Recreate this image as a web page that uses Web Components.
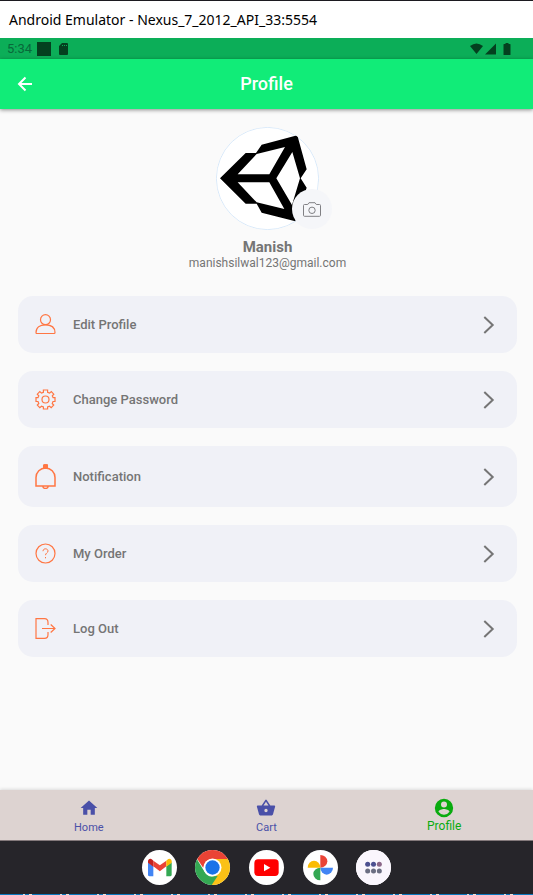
<!DOCTYPE html>
<html lang="en">
<head>
<meta charset="utf-8">
<meta name="viewport" content="width=device-width, initial-scale=1">
<title>Profile</title>
<style>
  html, body { margin: 0; height: 100%; }
  body { font-family: Roboto, "Liberation Sans", sans-serif; color: #757575; background: #fafafa; }
</style>
</head>
<body>
<emulator-window caption="Android Emulator - Nexus_7_2012_API_33:5554">
  <status-bar slot="top" time="5:34"></status-bar>
  <app-bar slot="top">Profile</app-bar>
  <profile-card name="Manish" email="manishsilwal123@gmail.com"></profile-card>
  <menu-list>
    <menu-item icon="user">Edit Profile</menu-item>
    <menu-item icon="gear">Change Password</menu-item>
    <menu-item icon="bell">Notification</menu-item>
    <menu-item icon="help">My Order</menu-item>
    <menu-item icon="logout">Log Out</menu-item>
  </menu-list>
  <tab-bar slot="bottom">
    <tab-link icon="home">Home</tab-link>
    <tab-link icon="cart">Cart</tab-link>
    <tab-link icon="account" active>Profile</tab-link>
  </tab-bar>
  <app-dock slot="bottom"></app-dock>
</emulator-window>

<script>
const define = (name, render) => customElements.define(name, class extends HTMLElement {
  constructor() {
    super();
    const t = document.createElement('template');
    t.innerHTML = render(this);
    this.attachShadow({ mode: 'open' }).appendChild(t.content.cloneNode(true));
  }
});

define('emulator-window', el => `
<style>
  :host { display: flex; flex-direction: column; min-height: 100vh; box-sizing: border-box; }
  .edge { height: 1px; flex: none; background: #1c1a20; }
  .edge.low { background: repeating-linear-gradient(90deg, #0a78bd 0 23px, #cfe0e8 23px 25px, #0a78bd 25px 29px, #e5e3dc 29px 32px, #0a78bd 32px 37px); }
  .title { flex: none; background: #fff; color: #000; font: 14px/20px "Noto Sans", "Open Sans", sans-serif; padding: 9px 9px 8px; }
  main { flex: 1; display: flex; flex-direction: column; padding: 18px 16px 18px 18px; }
</style>
<div class="edge"></div>
<div class="title">${el.getAttribute('caption')}</div>
<slot name="top"></slot>
<main><slot></slot></main>
<slot name="bottom"></slot>
<div class="edge low"></div>`);

define('status-bar', el => `
<style>
  :host { display: flex; align-items: center; height: 21px; background: #0cae58; color: #064a26; font-size: 13px; padding: 0 22px 0 7px; }
  .time { color: #08693a; margin-right: 5px; }
  .sq { width: 14px; height: 14px; background: #04401f; margin-right: 8px; }
  .right { margin-left: auto; display: flex; align-items: center; gap: 2px; }
  svg { display: block; fill: #04401f; }
  .bat { margin-left: 4px; }
</style>
<span class="time">${el.getAttribute('time')}</span>
<span class="sq"></span>
<svg width="9" height="12" viewBox="0 0 9 12"><path fill-rule="evenodd" d="M3 0h5a1 1 0 0 1 1 1v10a1 1 0 0 1-1 1H1a1 1 0 0 1-1-1V3zM3 2v1h1V2zM5 2v1h1V2zM7 2v1h1V2z"/></svg>
<span class="right">
  <svg width="13" height="12" viewBox="0 0 13 12"><path d="M0 3Q6.5-2 13 3L6.5 11z"/></svg>
  <svg width="12" height="12" viewBox="0 0 12 12"><path d="M0 11.500L11 .5v11z"/></svg>
  <svg class="bat" width="8" height="12" viewBox="0 0 8 12"><path d="M2.500 0h3v1H7q.5 0 .5.500v10q0 .5-.5.500H1q-.5 0-.5-.5v-10Q.5 1 1 1h1.500z"/></svg>
</span>`);

define('app-bar', () => `
<style>
  :host { display: grid; grid-template-columns: 1fr auto 1fr; align-items: center; height: 50px; background: #11ec78; color: #fff; box-shadow: 0 1px 4px rgba(0,0,0,.45); position: relative; }
  button { border: 0; background: none; padding: 0 0 0 16px; justify-self: start; color: inherit; }
  svg { display: block; }
  h1 { margin: 0; font-size: 18px; line-height: 24px; font-weight: 500; }
</style>
<button aria-label="Back"><svg width="18" height="18" viewBox="0 0 18 18" fill="none" stroke="#fff" stroke-width="2"><path d="M16 9H3M9.500 2.500L3 9l6.500 6.500"/></svg></button>
<h1><slot></slot></h1>`);

define('profile-card', el => `
<style>
  :host { display: flex; flex-direction: column; align-items: center; color: #757575; }
  .avatar { position: relative; width: 103px; height: 103px; margin-bottom: 8px; }
  .avatar > svg { display: block; width: 100%; height: 100%; border-radius: 50%; }
  button { position: absolute; right: -13px; bottom: 1px; width: 40px; height: 40px; padding: 0; border: 0; border-radius: 50%; background: #f5f6f9; display: grid; place-items: center; }
  h2 { margin: 0; font-size: 15px; line-height: 18px; font-weight: 700; }
  p { margin: 0; font-size: 12px; line-height: 14px; }
</style>
<div class="avatar">
  <svg viewBox="108 36 309 309" role="img" aria-label="Profile picture">
    <circle cx="262.500" cy="190.500" r="153.500" fill="#fff" stroke="#c4def8" stroke-width="2"/>
    <path d="M120 190L197 114H228L245 89L352 61L380 163L362 190L380 218L346 319L245 293L230 266H197Z"/>
    <path fill="#fff" d="M173 178L230 117L315 96L268 178ZM173 202H268L313 282L230 262ZM289 190L337 111L360 190L336 270Z"/>
  </svg>
  <button aria-label="Change picture"><svg width="18" height="15" viewBox="0 0 18 15" fill="none" stroke="#808084"><path d="M1.500 2.500h3.200L6 .700h6l1.300 1.800h3.200q1 0 1 1v9.800q0 1-1 1h-15q-1 0-1-1V3.500q0-1 1-1z"/><circle cx="9" cy="8.300" r="3.200"/></svg></button>
</div>
<h2>${el.getAttribute('name')}</h2>
<p>${el.getAttribute('email')}</p>`);

define('menu-list', () => `
<style>:host { display: flex; flex-direction: column; gap: 18px; margin-top: 26px; }</style>
<slot></slot>`);

const menuIcons = {
  user: [21, '<circle cx="10.500" cy="5.700" r="5"/><path d="M1 18.600C1 13.500 5 10.900 10.500 10.900S20 13.500 20 18.600q0 .9-.9.900H1.900Q1 19.500 1 18.600z"/>'],
  gear: [21, '<circle cx="10.500" cy="10.500" r="3.500"/><path d="M8.400 1h4.200v2.300l2 .8 1.700-1.500 2.500 2.600-1.500 1.700.8 1.700H20v3.900h-2l-.8 2 1.500 1.600-2.500 2.600-1.700-1.500-1.900.8V20H8.400v-2l-1.900-.8-1.700 1.500-2.500-2.600 1.500-1.600-.8-2H1V8.600h2l.8-1.700-1.500-1.700 2.500-2.600 1.700 1.500 1.900-.8z"/>'],
  bell: [25, '<path stroke-width="1.500" d="M1 22V13.500a9.500 9.500 0 0 1 19 0V22zM7.800 22.200c.3 3 5.100 3 5.400 0"/><circle cx="10.500" cy="2" r="2" fill="#ff7643" stroke="#ff7643"/><path fill="#ff7643" stroke="none" d="M8 3h5v2H8z"/>'],
  help: [21, '<circle cx="10.500" cy="10.500" r="9.500"/><path stroke-width="1" d="M8 8.200C8 4.800 13 5.300 13 8c0 2-2.500 1.900-2.500 4.200M10.500 14v1.300"/>'],
  logout: [21, '<path d="M13 7V4.500Q13 .6 9.500.6H1v19.800h8.500q3.500 0 3.500-3.900V14M7 10.500h13M15.700 6.500l4.300 4-4.300 4"/>']
};

define('menu-item', el => {
  const [h, art] = menuIcons[el.getAttribute('icon')];
  return `
<style>
  :host { display: block; }
  button { display: flex; align-items: center; width: 100%; padding: 18px 20px 18px 17px; border: 0; border-radius: 15px; background: #f0f1f7; color: #757575; font: 500 13px/18px Roboto, sans-serif; text-align: left; }
  svg { display: block; flex: none; }
  span { flex: 1; padding-left: 17px; }
</style>
<button>
  <svg width="21" height="${h}" viewBox="0 0 21 ${h}" fill="none" stroke="#ff7643" stroke-width="1.200">${art}</svg>
  <span><slot></slot></span>
  <svg width="16" height="18" viewBox="0 0 16 18" fill="none" stroke="#757575" stroke-width="2"><path d="M3.300 1l8.400 8-8.400 8"/></svg>
</button>`;
});

define('tab-bar', () => `
<style>:host { display: grid; grid-template-columns: repeat(3, 1fr); height: 50px; background: #ddd3d1; border-bottom: 1px solid #83797b; box-shadow: 0 -1px 3px rgba(0,0,0,.12); }</style>
<slot></slot>`);

const tabIcons = {
  home: '<path d="M10 20v-6h4v6h5v-8h3L12 3 2 12h3v8z"/>',
  cart: '<path d="M17.210 9l-4.380-6.560a1 1 0 0 0-1.660 0L6.790 9H2c-.55 0-1 .45-1 1l.04.270 2.540 9.270c.23.840 1 1.460 1.920 1.460h13c.92 0 1.690-.62 1.930-1.460l2.540-9.270L23 10c0-.55-.45-1-1-1zM9 9l3-4.400L15 9zm3 8a2 2 0 1 1 0-4 2 2 0 0 1 0 4z"/>',
  account: '<path d="M12 1a11 11 0 1 0 0 22 11 11 0 0 0 0-22zm0 3.300a3.600 3.600 0 1 1 0 7.200 3.600 3.600 0 0 1 0-7.200zm0 15.700a7.900 7.900 0 0 1-6.600-3.500c0-2.200 4.400-3.400 6.600-3.400s6.600 1.200 6.600 3.400A7.900 7.900 0 0 1 12 20z" fill-rule="evenodd"/>'
};

define('tab-link', el => `
<style>
  :host { display: flex; justify-content: center; }
  a { display: flex; flex-direction: column; align-items: center; gap: 2px; padding-top: 8px; color: #4a50a8; font-size: 11px; line-height: 16px; text-decoration: none; }
  :host([active]) a { color: #09ab0f; font-size: 12px; gap: 0; }
  svg { display: block; width: 20px; height: 20px; fill: currentColor; }
</style>
<a href="#"><svg viewBox="0 0 24 24">${tabIcons[el.getAttribute('icon')]}</svg><slot></slot></a>`);

define('app-dock', () => `
<style>
  :host { display: flex; justify-content: center; height: 53px; background: #26252a; }
  nav { display: grid; grid-template-columns: repeat(5, 1fr); width: 268px; place-items: center; }
  button { width: 35px; height: 35px; padding: 0; border: 0; border-radius: 50%; background: #fff; overflow: hidden; }
  svg { display: block; width: 35px; height: 35px; }
</style>
<nav aria-label="Apps">
  <button aria-label="Gmail"><svg viewBox="0 0 105 105"><path fill="#4285f4" d="M18 37L34 49V79H23Q18 79 18 74z"/><path fill="#34a853" d="M73 49L89 37V74Q89 79 84 79H73z"/><path fill="#ea4335" d="M34 32L53.500 46 73 32V49L53.500 64 34 49z"/><path fill="#c5221f" d="M18 38V34C18 26 26 24 31 29L34 32V50z"/><path fill="#fbbc04" d="M73 50V32L76 29C82 24 89 27 89 34V38z"/></svg></button>
  <button aria-label="Chrome"><svg viewBox="0 0 105 105"><path fill="#fbc116" d="M52.500 52.500L52.500 25H105V105H48z"/><path fill="#34a853" d="M0 18L29 66Q38 82 55 79L68 78 50 105H0z"/><path fill="#ea4335" d="M5 24Q25-8 60 0H80L100 27H52.500Q33 28 27 46L25 54z"/><circle cx="52.500" cy="52.500" r="27" fill="#fff"/><circle cx="52.500" cy="52.500" r="21.500" fill="#1a73e8"/></svg></button>
  <button aria-label="YouTube"><svg viewBox="0 0 105 105"><rect x="16" y="28" width="73" height="50" rx="11" fill="#f00"/><path fill="#fff" d="M45 42L64 53 45 64z"/></svg></button>
  <button aria-label="Photos"><svg viewBox="0 0 105 105"><path fill="#ea4335" d="M52 15a21 19 0 0 1 0 38z"/><path fill="#4285f4" d="M52 53h38a19 21 0 0 1-38 0z"/><path fill="#34a853" d="M52 53v38a21 19 0 0 1 0-38z"/><path fill="#fbbc04" d="M52 53H14a19 21 0 0 1 38 0z"/></svg></button>
  <button aria-label="All apps"><svg viewBox="0 0 105 105"><path fill="#faf6fd" d="M0 0h105v105H0z"/><g fill="#4c5090"><circle cx="35" cy="43" r="7.500"/><circle cx="52.500" cy="43" r="7.500"/><circle cx="70" cy="43" r="7.500" fill="#8b6688"/></g><g fill="#6b6e82"><circle cx="35" cy="63" r="7.500"/><circle cx="52.500" cy="63" r="7.500"/><circle cx="70" cy="63" r="7.500"/></g></svg></button>
</nav>`);
</script>
</body>
</html>
